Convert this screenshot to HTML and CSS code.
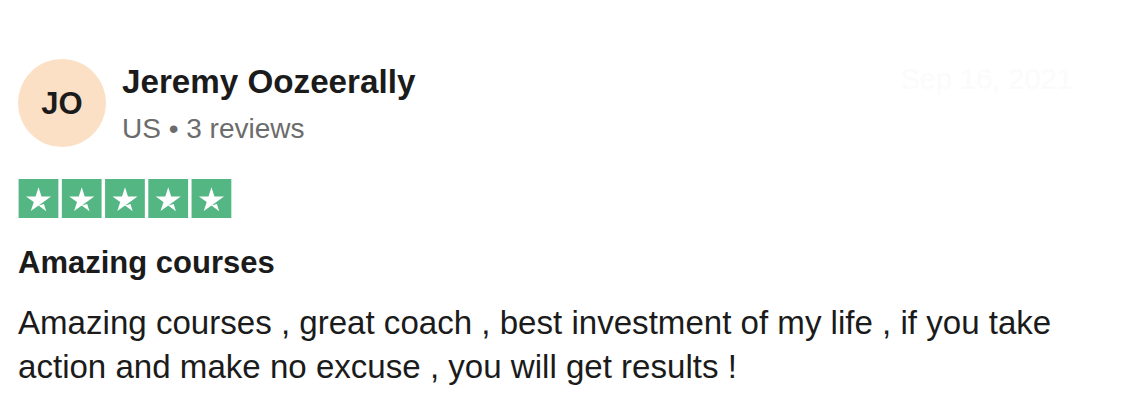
FILE: index.html
```html
<!DOCTYPE html>
<html lang="en">
<head>
<meta charset="utf-8">
<title>Review</title>
<link rel="stylesheet" href="styles.css">
</head>
<body>
<article class="review">
  <header class="review-header">
    <div class="consumer">
      <div class="avatar"><span>JO</span></div>
      <div class="consumer-info">
        <div class="consumer-name">Jeremy Oozeerally</div>
        <div class="consumer-meta">US • 3 reviews</div>
      </div>
    </div>
    <time class="review-date">Sep 16, 2021</time>
  </header>
  <div class="stars" aria-label="Rated 5 out of 5 stars">
    <svg width="214" height="39" viewBox="0 0 251 46" xmlns="http://www.w3.org/2000/svg">
      <g fill="#54b683">
        <rect x="0" y="0" width="46.9" height="46"/>
        <rect x="51" y="0" width="46.9" height="46"/>
        <rect x="102" y="0" width="46.9" height="46"/>
        <rect x="153" y="0" width="46.9" height="46"/>
        <rect x="204" y="0" width="46.9" height="46"/>
      </g>
      <g fill="#fff">
        <path d="M23.5 31.2l6.4-1.6 2.7 8.3-9.1-6.7zm14.8-10.7H27l-3.5-10.7-3.5 10.7H8.7l9.2 6.6-3.5 10.7 9.2-6.6 5.7-4.1 9-6.6z"/>
        <path transform="translate(51 0)" d="M23.5 31.2l6.4-1.6 2.7 8.3-9.1-6.7zm14.8-10.7H27l-3.5-10.7-3.5 10.7H8.7l9.2 6.6-3.5 10.7 9.2-6.6 5.7-4.1 9-6.6z"/>
        <path transform="translate(102 0)" d="M23.5 31.2l6.4-1.6 2.7 8.3-9.1-6.7zm14.8-10.7H27l-3.5-10.7-3.5 10.7H8.7l9.2 6.6-3.5 10.7 9.2-6.6 5.7-4.1 9-6.6z"/>
        <path transform="translate(153 0)" d="M23.5 31.2l6.4-1.6 2.7 8.3-9.1-6.7zm14.8-10.7H27l-3.5-10.7-3.5 10.7H8.7l9.2 6.6-3.5 10.7 9.2-6.6 5.7-4.1 9-6.6z"/>
        <path transform="translate(204 0)" d="M23.5 31.2l6.4-1.6 2.7 8.3-9.1-6.7zm14.8-10.7H27l-3.5-10.7-3.5 10.7H8.7l9.2 6.6-3.5 10.7 9.2-6.6 5.7-4.1 9-6.6z"/>
      </g>
    </svg>
  </div>
  <h2 class="review-title">Amazing courses</h2>
  <p class="review-text">Amazing courses , great coach , best investment of my life , if you take action and make no excuse , you will get results !</p>
</article>
</body>
</html>
```

FILE: styles.css
```css
html, body {
  margin: 0;
  padding: 0;
  background: #ffffff;
}

body {
  font-family: "Liberation Sans", Arial, Helvetica, sans-serif;
  color: #1b1b1b;
}

.review {
  padding: 59px 57px 0 18px;
  display: flex;
  flex-direction: column;
}

.review-header {
  display: flex;
  justify-content: space-between;
  align-items: flex-start;
}

.consumer {
  display: flex;
  align-items: flex-start;
  gap: 16px;
}

.avatar {
  width: 88px;
  height: 88px;
  border-radius: 50%;
  background: #fbe0c5;
  display: flex;
  align-items: center;
  justify-content: center;
  flex-shrink: 0;
}

.avatar span {
  font-size: 31px;
  font-weight: 700;
  color: #1b1b1b;
  line-height: 1;
}

.consumer-info {
  display: flex;
  flex-direction: column;
  gap: 7px;
  padding-top: 3px;
}

.consumer-name {
  font-size: 33.2px;
  font-weight: 700;
  line-height: 40px;
  color: #1b1b1b;
}

.consumer-meta {
  font-size: 28px;
  line-height: 40px;
  color: #6c6c6c;
}

.review-date {
  font-size: 29px;
  line-height: 36px;
  margin-top: 2px;
  color: #fbfbfb;
}

.stars {
  margin-top: 30px;
  height: 39px;
  display: flex;
}

.stars svg {
  display: block;
}

.review-title {
  margin: 27px 0 0;
  font-size: 31px;
  font-weight: 700;
  line-height: 36px;
  color: #1b1b1b;
}

.review-text {
  margin: 20px 0 0;
  font-size: 33.1px;
  line-height: 44px;
  color: #1b1b1b;
}
```
